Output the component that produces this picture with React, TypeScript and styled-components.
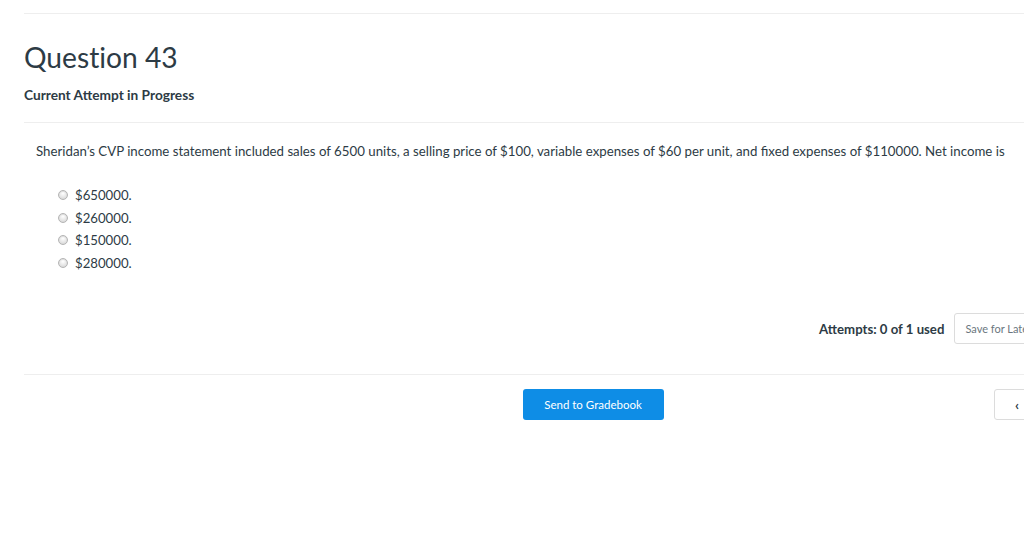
import styled, { createGlobalStyle } from 'styled-components'

const GlobalStyle = createGlobalStyle`
  html, body {
    margin: 0;
    padding: 0;
    background: #fff;
    overflow: hidden;
  }
  body {
    font-family: Lato, "Liberation Sans", sans-serif;
    color: #2d3b45;
  }
`

const Page = styled.div`
  width: 1138px;
  padding: 13px 0 0 24px;
`

const Divider = styled.hr`
  border: 0;
  border-top: 1px solid #eeeeee;
  margin: 0;
`

const Header = styled.header`
  padding: 25px 0 19px;
`

const Title = styled.h1`
  font-size: 28.2px;
  font-weight: 400;
  line-height: 36px;
  margin: 0 0 12px;
  color: #2d3b45;
  font-variant-ligatures: no-common-ligatures;
`

const Subtitle = styled.h2`
  font-size: 13.7px;
  font-weight: 700;
  line-height: 16px;
  margin: 0;
  color: #2d3b45;
`

const Body = styled.section`
  padding: 19px 0 0 12px;
`

const Prompt = styled.p`
  font-size: 13.25px;
  line-height: 18px;
  margin: 0 0 26px;
  color: #2d3b45;
`

const Options = styled.ul`
  list-style: none;
  margin: 0;
  padding: 0 0 0 22px;
  display: flex;
  flex-direction: column;
  gap: 4.7px;
`

const Option = styled.li`
  display: flex;
  align-items: center;
  gap: 7px;
  font-size: 13.2px;
  line-height: 18px;
  color: #2d3b45;
`

const Radio = styled.span`
  width: 8px;
  height: 8px;
  border-radius: 50%;
  border: 1px solid #b4b4b4;
  background: radial-gradient(circle at 50% 30%, #ffffff 0%, #e6e6e6 55%, #cfcfcf 100%);
  box-shadow: inset 0 1px 1px rgba(0, 0, 0, 0.08);
`

const ActionRow = styled.div`
  display: flex;
  justify-content: flex-end;
  align-items: center;
  gap: 10px;
  margin-top: 41px;
  padding: 0 14px 30px 0;
`

const Attempts = styled.span`
  font-size: 13.2px;
  font-weight: 700;
  color: #2d3b45;
`

const GhostButton = styled.button`
  height: 31px;
  padding: 0 10px;
  border: 1px solid #dcdcdc;
  border-radius: 3px;
  background: #fff;
  color: #6b7780;
  font-family: inherit;
  font-size: 11px;
`

const NavRow = styled.div`
  display: grid;
  grid-template-columns: 1fr auto 1fr;
  align-items: center;
  padding-top: 14px;
`

const PrimaryButton = styled.button`
  grid-column: 2;
  width: 141px;
  height: 31px;
  border: 0;
  border-radius: 3px;
  background: #0e8de6;
  color: #fff;
  font-family: inherit;
  font-size: 11.5px;
`

const Pager = styled.div`
  grid-column: 3;
  display: flex;
  justify-content: flex-end;
  gap: 8px;
  padding-right: 68px;
`

const ArrowButton = styled.button`
  width: 46px;
  height: 31px;
  border: 1px solid #dcdcdc;
  border-radius: 3px;
  background: #fff;
  color: #2d3b45;
  font-family: inherit;
  font-size: 14px;
  font-weight: 700;
  line-height: 1;
`

const choices = ['$650000.', '$260000.', '$150000.', '$280000.']

const App = () => {
  return (
    <Page>
      <GlobalStyle />
      <Divider />
      <Header>
        <Title>Question 43</Title>
        <Subtitle>Current Attempt in Progress</Subtitle>
      </Header>
      <Divider />
      <Body>
        <Prompt>
          Sheridan’s CVP income statement included sales of 6500 units, a selling price of $100, variable
          expenses of $60 per unit, and fixed expenses of $110000. Net income is
        </Prompt>
        <Options>
          {choices.map((c) => (
            <Option key={c}>
              <Radio />
              {c}
            </Option>
          ))}
        </Options>
      </Body>
      <ActionRow>
        <Attempts>Attempts: 0 of 1 used</Attempts>
        <GhostButton>Save for Later</GhostButton>
        <GhostButton>Submit Answer</GhostButton>
      </ActionRow>
      <Divider />
      <NavRow>
        <PrimaryButton>Send to Gradebook</PrimaryButton>
        <Pager>
          <ArrowButton>‹</ArrowButton>
          <ArrowButton>›</ArrowButton>
        </Pager>
      </NavRow>
    </Page>
  )
}

export default App
